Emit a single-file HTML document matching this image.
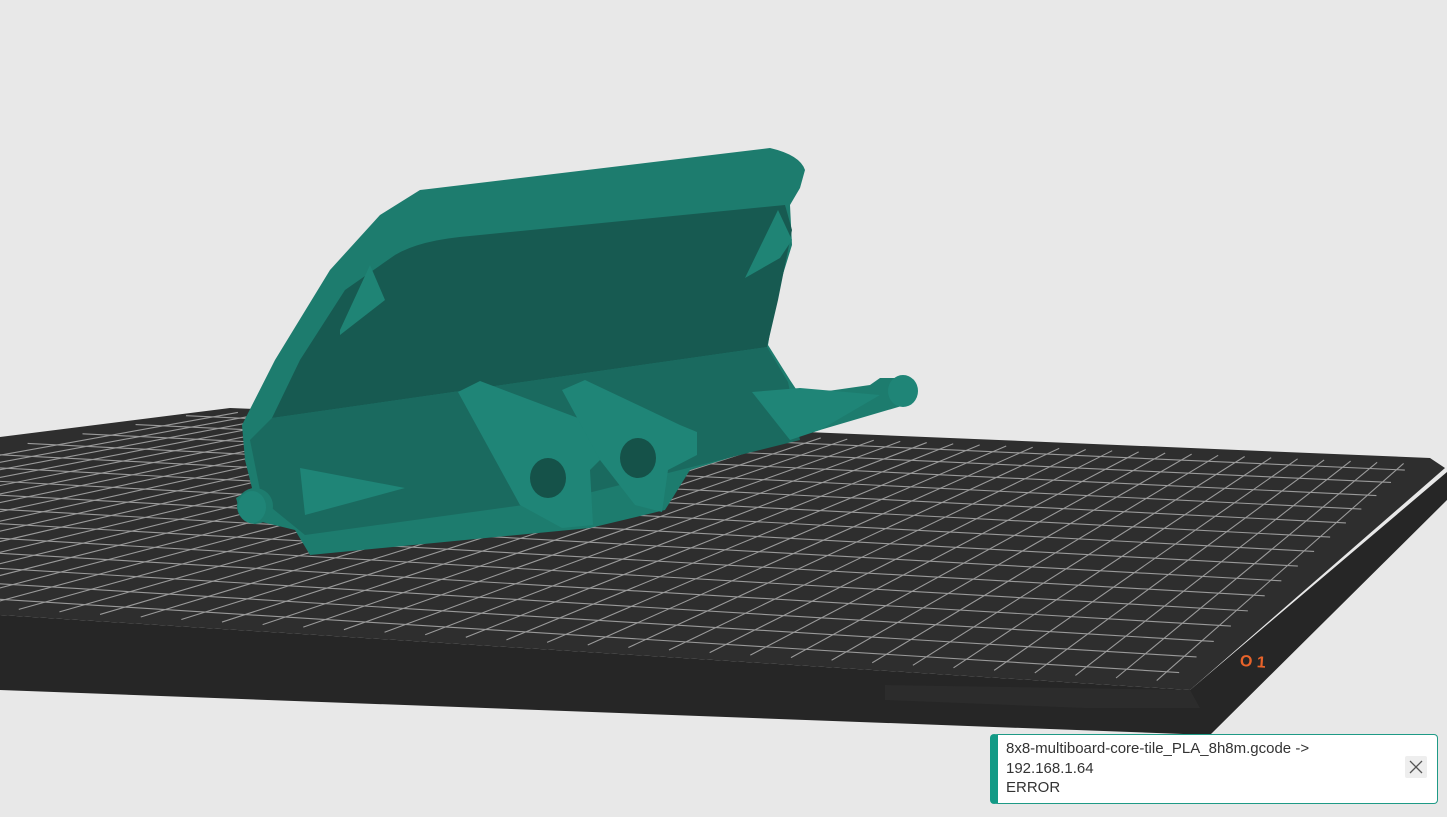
<!DOCTYPE html>
<html><head><meta charset="utf-8"><style>
html,body{margin:0;padding:0;width:1447px;height:817px;overflow:hidden;background:#e8e8e8;font-family:"Liberation Sans",sans-serif}
svg{position:absolute;left:0;top:0}
.toast{position:absolute;left:990px;top:734px;width:448px;height:70px;background:#fff;border:1px solid #1e9a86;border-left:8px solid #129a86;border-radius:4px;box-sizing:border-box}
.toast .t{position:absolute;left:8px;top:4px;font-size:15px;line-height:19.5px;color:#333}
.toast .x{position:absolute;right:10px;top:21px;width:22px;height:22px;background:#eee;border-radius:2px}
</style></head><body>
<svg id="s" width="1447" height="817" viewBox="0 0 1447 817">
<polygon points="0,615 1190,690 1447,472 1447,500 1210,735 0,690" fill="#262626"/>
<polygon points="885,685 1190,690 1200,708 1085,708 885,700" fill="#2c2c2c"/>
<polygon points="0,437 230,408 1430,458 1445,468 1190,690 0,615" fill="#2e2e2e"/>
<g id="grid" stroke="#9a9a9a" stroke-width="1.1" fill="none"></g>
<text x="1240" y="668" fill="#e8632a" font-size="16" font-weight="bold" transform="rotate(4 1270 662)">O 1</text>
<path d="M420,190 Q520,178 770,148 Q800,155 805,170 L800,188 L790,205 L792,245 L775,300 L768,345 L790,380 L800,395 L870,385 L880,378 L905,378 L916,392 L905,405 L820,430 L690,470 L665,510 L590,528 L310,555 L295,530 L262,522 L240,512 L236,498 L252,488 L245,460 L242,425 L275,360 L330,270 L380,215 Z" fill="#1d7c6e"/>
<path d="M395,255 Q420,240 470,236 L785,205 L792,230 L778,300 L767,347 L272,418 L300,360 L345,290 Z" fill="#175a51"/>
<path d="M272,418 L767,347 L788,382 L800,440 L560,500 L305,535 L262,500 L250,440 Z" fill="#1a6a5f"/>
<path d="M340,330 L370,265 L385,300 L340,335 Z" fill="#1f8475"/>
<path d="M745,278 L778,210 L792,240 L780,258 Z" fill="#1f8475"/>
<path d="M458,392 L480,381 L578,418 L605,455 L590,470 L593,525 L562,528 L520,505 Z" fill="#1f8577"/>
<path d="M562,390 L585,380 L680,425 L697,432 L697,455 L668,470 L662,512 L635,505 L600,460 Z" fill="#1f8577"/>
<path d="M752,392 L800,388 L880,395 L820,430 L790,440 Z" fill="#1f8577"/>
<path d="M300,468 L405,488 L305,515 Z" fill="#1f8577"/>
<ellipse cx="548" cy="478" rx="18" ry="20" fill="#155249"/>
<ellipse cx="638" cy="458" rx="18" ry="20" fill="#155249"/>
<ellipse cx="255" cy="506" rx="18" ry="18" fill="#1d7c6e"/>
<ellipse cx="252" cy="507" rx="14" ry="16" fill="#1f8577"/>
<ellipse cx="903" cy="391" rx="15" ry="16" fill="#1f8577"/>
</svg>
<div class="toast"><div class="t">8x8-multiboard-core-tile_PLA_8h8m.gcode -&gt;<br>192.168.1.64<br>ERROR</div>
<div class="x"><svg width="22" height="22"><path d="M5,5L17,17M17,5L5,17" stroke="#555" stroke-width="1.3"/></svg></div></div>
<script>
var A=[230,408],B=[1435,460],C=[1190,690],D=[-700,571];
function P(u,v){var tx=A[0]+(B[0]-A[0])*u,ty=A[1]+(B[1]-A[1])*u,bx=D[0]+(C[0]-D[0])*u,by=D[1]+(C[1]-D[1])*u;return [tx+(bx-tx)*v,ty+(by-ty)*v];}
var g=document.getElementById('grid'),h='';
var NU=46,NV=16;
for(var i=1;i<NU;i++){var a=P(i/NU,0.02),b=P(i/NU,0.97);h+='<line x1="'+a[0]+'" y1="'+a[1]+'" x2="'+b[0]+'" y2="'+b[1]+'"/>';}
for(var j=1;j<NV;j++){var v=Math.pow(j/NV,1.1);var a=P(0,v),b=P(0.985,v);h+='<line x1="'+a[0]+'" y1="'+a[1]+'" x2="'+b[0]+'" y2="'+b[1]+'"/>';}
g.innerHTML=h;
</script>
</body></html>
